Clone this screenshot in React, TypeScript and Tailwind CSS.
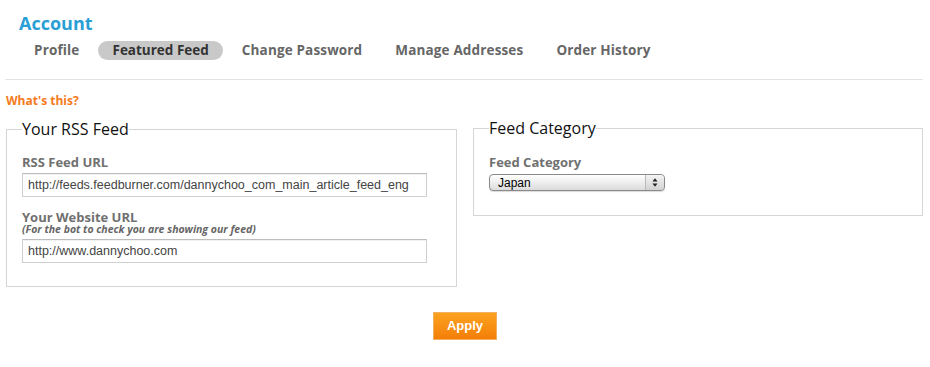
const tabs = ['Profile', 'Featured Feed', 'Change Password', 'Manage Addresses', 'Order History'];

function SelectArrows() {
    return (
        <svg width="8" height="11" viewBox="0 0 8 11">
            <path d="M1.5 4.5 L4 1.2 L6.5 4.5 Z" fill="#222" />
            <path d="M1.5 6.5 L4 9.8 L6.5 6.5 Z" fill="#222" />
        </svg>
    );
}

export default function App() {
    return (
        <div className="w-[930px] h-[367px] bg-white font-['Open_Sans',sans-serif] overflow-hidden">
            <h1 className="pl-[19px] pt-[12px] text-[18px] leading-[22px] font-bold text-[#2a9fd6]">Account</h1>

            <div className="flex gap-[5px] pl-[20px] mt-[7px]">
                {tabs.map((tab) => (
                    <div
                        key={tab}
                        className={
                            tab === 'Featured Feed'
                                ? 'px-[14px] h-[19px] leading-[19px] text-[13.5px] font-bold rounded-full bg-[#c9c9c9] text-[#333]'
                                : 'px-[14px] h-[19px] leading-[19px] text-[13.5px] tracking-[0.15px] font-bold text-[#666]'
                        }
                    >
                        {tab}
                    </div>
                ))}
            </div>

            <div className="mx-[5px] w-[918px] mt-[19px] border-t border-[#e2e2e2]" />

            <div className="pl-[6px] mt-[14px] text-[12px] leading-[13px] font-bold text-[#f47b20]">What's this?</div>

            <div className="flex items-start pl-[6px] gap-[16px] mt-[11px]">
                <fieldset className="w-[451px] mt-[1px] border border-[#d6d6d6] px-[15px] pt-[17px] pb-[23px]">
                    <legend className="text-[16px] leading-[20px] text-[#111]">Your RSS Feed</legend>
                    <div className="text-[13px] leading-[12px] font-bold text-[#707070]">RSS Feed URL</div>
                    <div className="mt-[5px] w-[405px] h-[24px] border border-[#cfcfcf] border-t-[#bdbdbd] shadow-[inset_0_1px_1px_rgba(0,0,0,0.06)] pl-[5px] flex items-center font-['Liberation_Sans',Arial,sans-serif] text-[12.5px] text-[#444]">
                        http://feeds.feedburner.com/dannychoo_com_main_article_feed_eng
                    </div>
                    <div className="mt-[14px] text-[13px] leading-[12px] font-bold text-[#707070]">Your Website URL</div>
                    <div className="mt-[1px] text-[10.5px] leading-[10px] font-bold italic text-[#666]">(For the bot to check you are showing our feed)</div>
                    <div className="mt-[5px] w-[405px] h-[24px] border border-[#cfcfcf] border-t-[#bdbdbd] shadow-[inset_0_1px_1px_rgba(0,0,0,0.06)] pl-[5px] flex items-center font-['Liberation_Sans',Arial,sans-serif] text-[12.5px] text-[#444]">
                        http://www.dannychoo.com
                    </div>
                </fieldset>

                <fieldset className="w-[450px] border border-[#d6d6d6] px-[15px] pt-[18px] pb-[24px]">
                    <legend className="text-[16px] leading-[20px] text-[#111]">Feed Category</legend>
                    <div className="text-[13px] leading-[12px] font-bold text-[#707070]">Feed Category</div>
                    <div className="mt-[6px] w-[176px] h-[17px] flex rounded-[4px] border border-[#8a8a8a] bg-gradient-to-b from-white to-[#dcdcdc] shadow-[0_1px_1px_rgba(0,0,0,0.15)] overflow-hidden">
                        <div className="flex-1 pl-[8px] flex items-center font-['Liberation_Sans',Arial,sans-serif] text-[12px] text-black">Japan</div>
                        <div className="w-[19px] flex items-center justify-center rounded-r-[3px] border-l border-[#b8b8b8] bg-gradient-to-b from-[#f4f4f4] to-[#d2d2d2]">
                            <SelectArrows />
                        </div>
                    </div>
                </fieldset>
            </div>

            <div className="flex justify-center mt-[25px]">
                <button className="w-[64px] h-[28px] bg-gradient-to-b from-[#fba21f] to-[#f47e06] border border-[#f0b060] text-white font-bold text-[13px] font-['Liberation_Sans',Arial,sans-serif]">
                    Apply
                </button>
            </div>
        </div>
    );
}
